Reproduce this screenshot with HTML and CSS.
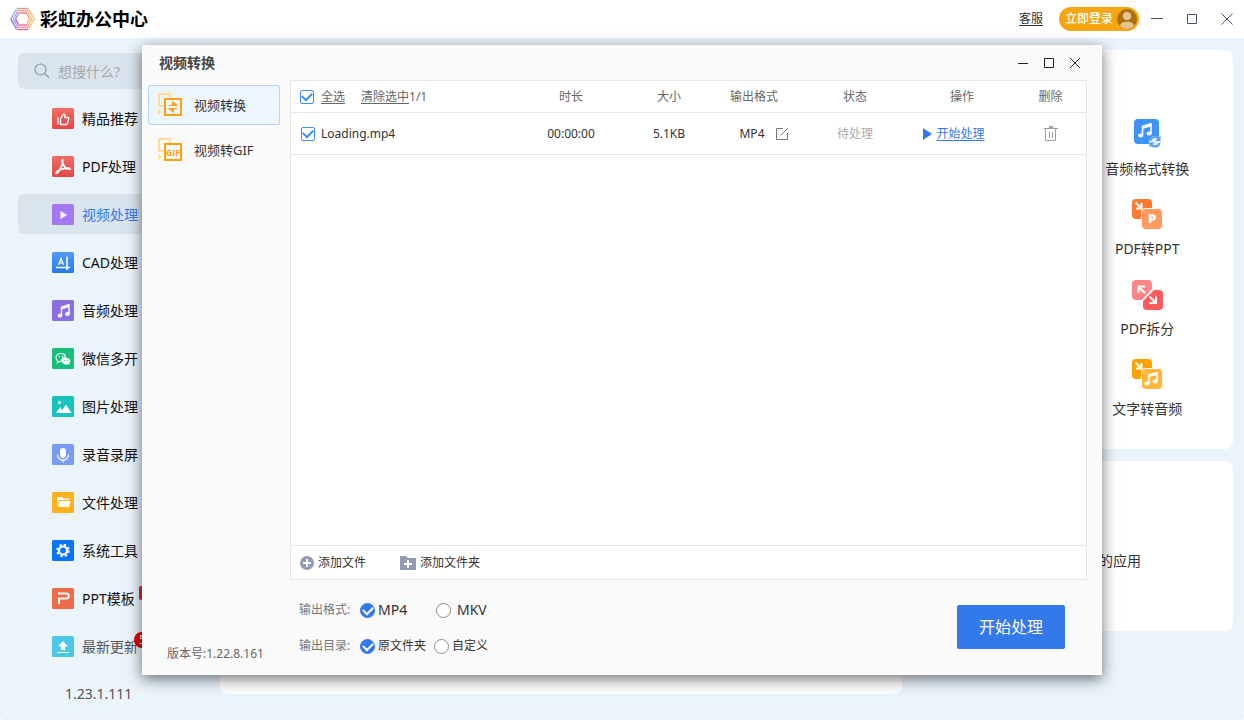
FILE: index.html
```html
<!DOCTYPE html>
<html lang="zh-CN">
<head>
<meta charset="utf-8">
<title>彩虹办公中心</title>
<link rel="stylesheet" href="styles.css">
</head>
<body>
<div class="app">
  <header class="topbar">
    <svg class="logo" width="25" height="24" viewBox="0 0 25 24" fill="none" stroke-width="1.300">
      <path d="M7 1.500h11" stroke="#f08a8a"/><path d="M6.500 3.800h12" stroke="#f6a27c"/><path d="M8 6h9" stroke="#ee7070"/>
      <path d="M18.500 2l5.800 10" stroke="#f6b862"/><path d="M17.500 4.500l4.300 7.500" stroke="#fbc070"/><path d="M16.500 6.500l3 5.500" stroke="#f49a50"/>
      <path d="M24.300 12l-5.800 10" stroke="#f8c070"/><path d="M21.800 12l-4.300 7.500" stroke="#f3aa70"/><path d="M19.500 12l-3 5.500" stroke="#f6b862"/>
      <path d="M18 22.500H7" stroke="#e2607c"/><path d="M18.500 20.200H6.500" stroke="#f08aa0"/><path d="M17 18H8" stroke="#e06a80"/>
      <path d="M6.500 22L.7 12" stroke="#7a6ae0"/><path d="M7.500 19.500L3.200 12" stroke="#a88af0"/><path d="M8.500 17.500l-3-5.500" stroke="#8a5ad8"/>
      <path d="M.7 12l5.800-10" stroke="#7ab0f0"/><path d="M3.200 12l4.300-7.500" stroke="#b59af0"/><path d="M5.500 12l3-5.500" stroke="#8a8af0"/>
    </svg>
    <h1 class="brand">彩虹办公中心</h1>
    <a class="service" href="#">客服</a>
    <button class="login" type="button"><span>立即登录</span>
      <svg width="20" height="20" viewBox="0 0 20 20"><circle cx="10" cy="10" r="10" fill="#a97108"/><circle cx="10" cy="7" r="4.300" fill="#e3c492"/><path d="M3 17.100c.4-3 3-4.300 7-4.300s6.600 1.300 7 4.300A10 10 0 0 1 10 20a10 10 0 0 1-7-2.900z" fill="#e3c492"/></svg>
    </button>
    <div class="controls controls-app">
      <button type="button" aria-label="最小化"><svg width="12" height="12" viewBox="0 0 12 12"><path d="M0 5.500h12"/></svg></button>
      <button type="button" aria-label="最大化"><svg width="12" height="12" viewBox="0 0 12 12"><path d="M1.500 1.500h9v9h-9z"/></svg></button>
      <button type="button" aria-label="关闭"><svg width="12" height="12" viewBox="0 0 12 12"><path d="M.5.500l11 11M11.500.500l-11 11"/></svg></button>
    </div>
  </header>

  <div class="workspace">
    <aside class="sidebar">
      <label class="search">
        <svg width="16" height="16" viewBox="0 0 16 16" fill="none" stroke="#8797a3" stroke-width="1.200"><circle cx="6.500" cy="6.500" r="5.500"/><path d="M10.500 10.500l4.500 4"/></svg>
        <input type="text" aria-label="搜索" placeholder="想搜什么?">
      </label>
      <nav class="menu">
        <a href="#"><svg class="tile" viewBox="0 0 22 22"><defs><linearGradient id="g1" x2="0" y2="1"><stop stop-color="#f26c68"/><stop offset="1" stop-color="#e44744"/></linearGradient></defs><rect width="22" height="21" rx="1.500" fill="url(#g1)"/><path d="M6 9.500v7M8.500 16.500v-6l3.200-4.700c1.800.1 1.500 1.700 1 3.700h3.300c.8 0 1 .6.8 1.300l-1.300 4.600c-.2.800-.6 1.100-1.300 1.100z" fill="none" stroke="#fff" stroke-width="1.300" stroke-linejoin="round"/></svg><span>精品推荐</span></a>
        <a href="#"><svg class="tile" viewBox="0 0 22 22"><rect width="22" height="21" rx="1.500" fill="url(#g1)"/><path d="M10.500 4c-1.300.3 1 6 3.500 8 2 1.500 4.500 1.500 4.200.8-.5-1.300-8.500-.5-11.700 1.700-2.500 1.700-2.800 2.600-2 2.800 2 .2 7.700-11.800 6-13.300z" fill="none" stroke="#fff" stroke-width="1.700"/></svg><span>PDF处理</span></a>
        <a class="active" href="#"><svg class="tile" viewBox="0 0 22 22"><rect width="22" height="21" rx="1.500" fill="#a678f2"/><path d="M8.500 7v8l6.500-4z" fill="#fff"/></svg><span>视频处理</span></a>
        <a href="#"><svg class="tile" viewBox="0 0 22 22"><defs><linearGradient id="g2" x2="0" y2="1"><stop stop-color="#5399f4"/><stop offset="1" stop-color="#267bf1"/></linearGradient></defs><rect width="22" height="21" rx="1.500" fill="url(#g2)"/><path d="M6.500 13L9 6.500 11.500 13M7.500 11h3" fill="none" stroke="#fff" stroke-width="1.200"/><path d="M4 15.500h14M15 4.500V18" stroke="#fff" stroke-width="1.500"/></svg><span>CAD处理</span></a>
        <a href="#"><svg class="tile" viewBox="0 0 22 22"><rect width="22" height="21" rx="1.500" fill="#8a6fe2"/><path d="M9.500 15.500V7.500L17 5v9" fill="none" stroke="#fff" stroke-width="1.400"/><path d="M9.500 6.500L17 4v3L9.500 9.500z" fill="#fff"/><ellipse cx="8" cy="15.700" rx="2.300" ry="1.900" fill="#fff"/><ellipse cx="15.500" cy="14" rx="2.300" ry="1.900" fill="#fff"/></svg><span>音频处理</span></a>
        <a href="#"><svg class="tile" viewBox="0 0 22 22"><rect width="22" height="21" rx="1.500" fill="#17bf7a"/><path d="M8.800 5.500c2.800 0 4.700 1.700 4.700 3.900-2.200 0-4.300 1.400-4.200 4l-2.100.3-1.900 1 .4-1.800C4.600 12.200 4 11 4 9.600c0-2.400 2-4.100 4.800-4.100z" fill="none" stroke="#fff" stroke-width="1.100"/><circle cx="7.200" cy="8.500" r=".7" fill="#fff"/><circle cx="10.500" cy="8.500" r=".7" fill="#fff"/><path d="M14 9.800c2.500 0 4.300 1.500 4.300 3.400 0 1-.5 1.800-1.300 2.400l.3 1.500-1.700-.8c-3.200.7-5.800-.8-5.800-3.100 0-1.900 1.800-3.400 4.200-3.400z" fill="#fff"/><circle cx="12.500" cy="12.500" r=".6" fill="#17bf7a"/><circle cx="15.500" cy="12.500" r=".6" fill="#17bf7a"/></svg><span>微信多开</span></a>
        <a href="#"><svg class="tile" viewBox="0 0 22 22"><rect width="22" height="21" rx="1.500" fill="#17c3bc"/><circle cx="7.500" cy="6.500" r="1.500" fill="#fff"/><path d="M4 17l4-6 2.500 3L14 8.500l5.500 8.500z" fill="#fff"/></svg><span>图片处理</span></a>
        <a href="#"><svg class="tile" viewBox="0 0 22 22"><rect width="22" height="21" rx="1.500" fill="#789cf3"/><rect x="8" y="4" width="6" height="10" rx="3" fill="#fff"/><path d="M5.500 10.500c0 7.500 11 7.500 11 0M11 16v2.500" fill="none" stroke="#fff" stroke-width="1.300"/></svg><span>录音录屏</span></a>
        <a href="#"><svg class="tile" viewBox="0 0 22 22"><rect width="22" height="21" rx="1.500" fill="#ffb21c"/><path d="M5 14V5h5l1.500 1.500H17V8H7.500z" fill="#fff"/><path d="M8 9h10.500L17 15H6z" fill="#fff"/></svg><span>文件处理</span></a>
        <a href="#"><svg class="tile" viewBox="0 0 22 22"><rect width="22" height="21" rx="1.500" fill="#0a73fb"/><circle cx="11" cy="10.500" r="4" fill="none" stroke="#fff" stroke-width="2.200"/><circle cx="11" cy="10.500" r="5.700" fill="none" stroke="#fff" stroke-width="2" stroke-dasharray="2.400 2.077"/></svg><span>系统工具</span></a>
        <a href="#"><svg class="tile" viewBox="0 0 22 22"><rect width="22" height="21" rx="1.500" fill="#ee6a48"/><path d="M6 5.500h8.500c3 0 3 5 0 5H7V16" fill="none" stroke="#fff" stroke-width="2"/></svg><span>PPT模板</span><i class="flag"></i></a>
        <a class="muted" href="#"><svg class="tile" viewBox="0 0 22 22"><rect width="22" height="21" rx="1.500" fill="#4ac8e8"/><path d="M11 5l5 5.500h-3V14H9v-3.500H6z" fill="#fff"/><path d="M5 16.500h12" stroke="#fff" stroke-width="1.200"/></svg><span>最新更新</span><i class="count">5</i></a>
      </nav>
      <p class="build">1.23.1.111</p>
    </aside>

    <main class="content">
      <section class="card board"></section>
      <div class="side">
        <section class="card tools">
          <a href="#"><svg width="32" height="32" viewBox="0 0 32 32"><rect x="3" y="1" width="25" height="25" rx="4" fill="#3d94f8"/><path d="M11.500 17V8.500L20 6v9" fill="none" stroke="#fff" stroke-width="1.600"/><path d="M11.500 7.500L20 5v3.500L11.500 11z" fill="#fff"/><ellipse cx="9.700" cy="17.500" rx="2.600" ry="2.100" fill="#fff"/><ellipse cx="18.200" cy="15.500" rx="2.600" ry="2.100" fill="#fff"/><circle cx="24" cy="24" r="6" fill="#e4effd"/><path d="M19.500 22.500c1-4 6-4.500 8.500-1.500M28.500 25c-1 4.500-6 4.500-8.500 1.500" fill="none" stroke="#5a9cf0" stroke-width="2"/><path d="M29.500 18v5h-5zM18.500 29.500v-5h5z" fill="#5a9cf0"/></svg>音频格式转换</a>
          <a href="#"><svg width="32" height="32" viewBox="0 0 32 32"><rect x="1" y="1" width="20" height="20" rx="4" fill="#ff7a2e"/><path d="M4.500 4.500l5 5M10.500 5v5.500H5" fill="none" stroke="#fff" stroke-width="2"/><rect x="10.500" y="10.500" width="21" height="21" rx="4" fill="#ff9a60" stroke="#fff"/><path d="M19 25v-7.500h2.500a2 2 0 0 1 0 4H19" fill="none" stroke="#fff" stroke-width="2.600"/></svg>PDF转PPT</a>
          <a href="#"><svg width="32" height="32" viewBox="0 0 32 32"><path d="M5 2h12a4 4 0 0 1 4 4v5L11 22H5a4 4 0 0 1-4-4V6a4 4 0 0 1 4-4z" fill="#ff8688"/><path d="M23 12h5a4 4 0 0 1 4 4v12a4 4 0 0 1-4 4H16a4 4 0 0 1-4-4v-5z" fill="#ff5a5d"/><path d="M14 15L8 9.500M7.500 15V8.500H14M18.500 18.500l6 6M25 18.500V25h-6.500" fill="none" stroke="#fff" stroke-width="2"/></svg>PDF拆分</a>
          <a href="#"><svg width="32" height="32" viewBox="0 0 32 32"><rect x="1" y="1" width="20" height="20" rx="4" fill="#ffa200"/><path d="M4.500 4.500l5 5M10.500 5v5.500H5" fill="none" stroke="#fff" stroke-width="2"/><rect x="10.500" y="10.500" width="21" height="21" rx="4" fill="#ffb83a" stroke="#fff"/><path d="M18 25v-8l8-2v8" fill="none" stroke="#fff" stroke-width="1.600"/><path d="M18 16l8-2v3l-8 2z" fill="#fff"/><ellipse cx="16" cy="25.500" rx="2.600" ry="2.100" fill="#fff"/><ellipse cx="24" cy="23.500" rx="2.600" ry="2.100" fill="#fff"/></svg>文字转音频</a>
        </section>
        <section class="card more"><p>的应用</p></section>
      </div>
    </main>
  </div>

  <section class="dialog" role="dialog" aria-labelledby="dialog-title">
    <header class="dialog-bar">
      <h2 id="dialog-title">视频转换</h2>
      <div class="controls controls-dialog">
        <button type="button" aria-label="最小化"><svg width="12" height="12" viewBox="0 0 12 12"><path d="M1 6.500h10"/></svg></button>
        <button type="button" aria-label="最大化"><svg width="12" height="12" viewBox="0 0 12 12"><path d="M1.500 1.500h9v9h-9z"/></svg></button>
        <button type="button" aria-label="关闭"><svg width="12" height="12" viewBox="0 0 12 12"><path d="M1 1l10 10M11 1L1 11"/></svg></button>
      </div>
    </header>
    <div class="dialog-body">
      <div class="modes">
        <button class="mode selected" type="button"><svg width="26" height="26" viewBox="0 0 26 26"><path d="M7 14H2V2h11v4" fill="none" stroke="#ffdb9c" stroke-width="2"/><path d="M1 17v6l4-3z" fill="#ffdb9c"/><path d="M8 7h16v16H8z" fill="none" stroke="#fda012" stroke-width="2"/><path d="M11.500 13.500h9L15.500 9.500v4M20.500 16.500h-9l5 4v-4" fill="#fda012" stroke="#fda012" stroke-width="1"/></svg>视频转换</button>
        <button class="mode" type="button"><svg width="26" height="26" viewBox="0 0 26 26"><path d="M7 14H2V2h11v4" fill="none" stroke="#ffdb9c" stroke-width="2"/><path d="M1 17v6l4-3z" fill="#ffdb9c"/><path d="M8 7h16v16H8z" fill="none" stroke="#fda012" stroke-width="2"/><text class="gif" x="16" y="19" text-anchor="middle">GIF</text></svg>视频转GIF</button>
        <p class="version">版本号:1.22.8.161</p>
      </div>
      <form class="job">
        <div class="panel">
          <table class="files">
            <colgroup><col><col class="c-time"><col class="c-size"><col class="c-format"><col class="c-state"><col class="c-action"><col class="c-delete"></colgroup>
            <thead><tr>
              <th><div class="cell"><input class="tick" type="checkbox" id="all" checked><label class="under" for="all">全选</label><span class="clear"><a href="#">清除选中</a>1/1</span></div></th>
              <th>时长</th><th>大小</th><th>输出格式</th><th>状态</th><th>操作</th><th>删除</th>
            </tr></thead>
            <tbody><tr>
              <td><div class="cell cell-file"><input class="tick" type="checkbox" id="file" checked><label for="file">Loading.mp4</label></div></td>
              <td>00:00:00</td><td>5.1KB</td>
              <td><div class="format">MP4<button type="button" aria-label="修改格式"><svg width="14" height="14" viewBox="0 0 14 14" fill="none" stroke="#777"><path d="M8 1.500H1.500v11h11V6M5.500 8.500L13 1"/></svg></button></div></td>
              <td class="pending">待处理</td>
              <td><a class="start" href="#"><svg width="9" height="12" viewBox="0 0 9 12"><path d="M0 0v12l9-6z" fill="#3479ea"/></svg><span>开始处理</span></a></td>
              <td><button class="trash" type="button" aria-label="删除"><svg width="16" height="16" viewBox="0 0 16 16" fill="none" stroke="#a0a0a0"><path d="M1 2.500h14M2.500 3v11.500h10V3M6.500 6v6M9.500 6v6"/><path d="M6 1h4" stroke-width="2"/></svg></button></td>
            </tr></tbody>
          </table>
          <div class="adders">
            <button type="button"><svg width="14" height="14" viewBox="0 0 14 14"><circle cx="7" cy="7" r="7" fill="#949bb0"/><path d="M7 3v8M3 7h8" stroke="#fff" stroke-width="2"/></svg>添加文件</button>
            <button type="button"><svg width="16" height="14" viewBox="0 0 16 14"><path d="M0 0h6l2 2h8v12H0z" fill="#949bb0"/><path d="M8 4v8M4 8h8" stroke="#fff" stroke-width="2"/></svg>添加文件夹</button>
          </div>
        </div>
        <div class="options">
          <div class="settings">
            <div class="setting" role="radiogroup" aria-label="输出格式">
              <span class="caption">输出格式:</span>
              <label class="choice latin wide"><input type="radio" name="format" checked>MP4</label>
              <label class="choice latin spaced"><input type="radio" name="format">MKV</label>
            </div>
            <div class="setting" role="radiogroup" aria-label="输出目录">
              <span class="caption">输出目录:</span>
              <label class="choice wide"><input type="radio" name="folder" checked>原文件夹</label>
              <label class="choice"><input type="radio" name="folder">自定义</label>
            </div>
          </div>
          <button class="primary" type="button">开始处理</button>
        </div>
      </form>
    </div>
  </section>
</div>
</body>
</html>
```
FILE: styles.css
```css
* { box-sizing: border-box; }
html { background: #fff; }
body {
  margin: 0;
  font: 12px/20px "Noto Sans", "Noto Sans CJK SC", sans-serif;
  color: #333;
}
h1, h2, p { margin: 0; }
button, input { font: inherit; color: inherit; }
button { padding: 0; border: 0; background: none; cursor: pointer; }
a { color: inherit; text-decoration: none; }
svg { display: block; flex: none; }

.app {
  position: relative;
  display: flex;
  flex-direction: column;
  min-height: 100vh;
  overflow: hidden;
  background: #ebf3fb;
  border-radius: 0 0 4px 4px;
}

.topbar {
  display: flex;
  align-items: center;
  height: 38px;
  padding: 0 11px 0 10px;
  background: #fff;
}
.brand { margin: 0 auto 0 5px; font-size: 18px; line-height: 24px; color: #000; }
.service { text-decoration: underline; text-underline-offset: 2px; }
.login {
  display: flex;
  align-items: center;
  justify-content: space-between;
  width: 80px;
  height: 24px;
  margin: 0 12px 0 16px;
  padding: 0 2px 0 6px;
  border-radius: 12px;
  background: #f5a60c;
  color: #fff;
  font-weight: 500;
}
.controls { display: flex; }
.controls svg { fill: none; stroke: #4a5472; }
.controls-app { gap: 23px; }
.controls-dialog { gap: 14px; }
.controls-dialog svg { stroke: #222; }

.workspace { display: flex; flex: 1; }
.sidebar { width: 220px; padding: 15px 18px; }
.search {
  display: flex;
  align-items: center;
  gap: 8px;
  height: 36px;
  padding: 0 16px;
  border-radius: 6px;
  background: #dae4ec;
}
.search input {
  width: 100%;
  min-width: 0;
  padding: 1px 0 0;
  border: 0;
  outline: 0;
  background: none;
  font-size: 14px;
}
.search input::placeholder { color: #a3a8ac; opacity: 1; }
.menu { display: flex; flex-direction: column; gap: 8px; margin-top: 9px; }
.menu a {
  position: relative;
  display: flex;
  align-items: center;
  gap: 8px;
  height: 40px;
  padding: 2px 0 0 34px;
  border-radius: 6px;
  font-size: 14px;
  color: #111;
}
.menu .active { background: #dae4ec; color: #3479ea; }
.menu .muted { color: #555; }
.tile { width: 22px; height: 22px; }
.flag, .count { position: absolute; background: #d9302f; }
.flag { left: 121px; top: 8px; width: 30px; height: 14px; border-radius: 2px; }
.count {
  left: 116px;
  top: 6px;
  min-width: 16px;
  padding-left: 5px;
  border-radius: 8px;
  background: #e00000;
  color: #fff;
  font-size: 12px;
  line-height: 16px;
  font-style: normal;
}
.build { margin: 18px 0 0 47px; font-size: 14px; color: #555; }

.content { display: flex; flex: 1; gap: 12px; padding: 12px 11px 26px 0; }
.card { border-radius: 8px; background: #fff; }
.board { flex: 1; }
.side { display: flex; flex-direction: column; gap: 12px; width: 319px; }
.tools {
  display: grid;
  grid-template-columns: 1fr 1fr;
  row-gap: 18px;
  padding: 68px 8px 29px 0;
}
.tools a {
  grid-column: 2;
  display: flex;
  flex-direction: column;
  align-items: center;
  gap: 8px;
  font-size: 14px;
  line-height: 22px;
}
.more { padding: 90px 92px 60px 0; font-size: 14px; text-align: right; }

.dialog {
  position: absolute;
  inset: 45px 142px;
  display: flex;
  flex-direction: column;
  background: #fafafa;
  box-shadow: 0 4px 14px rgba(0, 0, 0, 0.55);
}
.dialog-bar {
  display: flex;
  align-items: center;
  justify-content: space-between;
  height: 35px;
  padding: 0 21px 0 17px;
}
.dialog-bar h2 { font-size: 14px; color: #444; }
.dialog-body { display: flex; flex: 1; }
.modes {
  display: flex;
  flex-direction: column;
  gap: 5px;
  width: 148px;
  padding: 5px 10px 11px 6px;
}
.mode {
  display: flex;
  align-items: center;
  gap: 11px;
  height: 40px;
  padding-left: 8px;
  border: 1px solid transparent;
  border-radius: 2px;
  font-size: 13px;
}
.selected { border-color: #b6d4fb; background: #edf5ff; }
.gif { font: bold 9px "Open Sans", sans-serif; fill: #fda012; }
.version { margin: auto 0 0 19px; color: #666; }

.job { display: flex; flex: 1; flex-direction: column; padding-right: 15px; }
.panel {
  display: flex;
  flex: 1;
  flex-direction: column;
  border: 1px solid #e6e6e6;
  background: #fff;
}
.files { width: 100%; border-collapse: collapse; table-layout: fixed; }
.files tr { border-bottom: 1px solid #e6e6e6; }
.files th { height: 31px; padding: 1px 0 0; font-weight: 400; color: #666; }
.files td { height: 42px; padding: 1px 0 0; text-align: center; }
.c-time { width: 120px; }
.c-size { width: 76px; }
.c-format { width: 94px; }
.c-state { width: 108px; }
.c-action { width: 106px; }
.c-delete { width: 71px; }
.cell { display: flex; align-items: center; gap: 7px; padding-left: 9px; }
.cell-file { gap: 6px; padding-left: 10px; }
.under, .clear a { text-decoration: underline; text-underline-offset: 2px; }
.clear { margin-left: 9px; }
.tick {
  display: grid;
  place-items: center;
  width: 14px;
  height: 14px;
  margin: 0;
  border: 1px solid #3e8ef7;
  border-radius: 2px;
  background: #fff;
  appearance: none;
}
.tick:checked::after,
.choice input:checked::after {
  content: "";
  width: 8px;
  height: 5px;
  margin-bottom: 2px;
  border: solid #3e8ef7;
  border-width: 0 0 2px 2px;
  transform: rotate(-45deg);
}
.format { display: flex; align-items: center; justify-content: center; gap: 10px; padding-left: 20px; }
.files .pending { color: #aaa; }
.start {
  display: flex;
  align-items: center;
  justify-content: center;
  gap: 4px;
  padding-right: 16px;
  color: #3479ea;
}
.start span { text-decoration: underline; text-underline-offset: 2px; }
.trash { display: block; margin: 0 auto; }
.adders {
  display: flex;
  gap: 34px;
  margin-top: auto;
  padding-left: 9px;
  border-top: 1px solid #e6e6e6;
}
.adders button { display: flex; align-items: center; gap: 4px; height: 33px; }

.options {
  display: flex;
  align-items: flex-start;
  justify-content: space-between;
  height: 95px;
  padding: 20px 22px 0 9px;
}
.settings { display: flex; flex-direction: column; gap: 16px; }
.setting { display: flex; align-items: center; }
.caption { width: 61px; color: #777; }
.choice { display: flex; align-items: center; gap: 3px; }
.latin { font-size: 14px; }
.wide { min-width: 74px; }
.spaced { gap: 6px; margin-left: 2px; }
.choice input {
  display: grid;
  place-items: center;
  width: 15px;
  height: 15px;
  margin: 0;
  border: 1px solid #8c8c8c;
  border-radius: 50%;
  background: #fff;
  appearance: none;
}
.choice input:checked { border-color: #3479ea; background: #3479ea; }
.choice input:checked::after { border-color: #fff; }
.primary {
  width: 108px;
  height: 44px;
  margin-top: 5px;
  border-radius: 2px;
  background: #3479ea;
  color: #fff;
  font-size: 16px;
}
```
